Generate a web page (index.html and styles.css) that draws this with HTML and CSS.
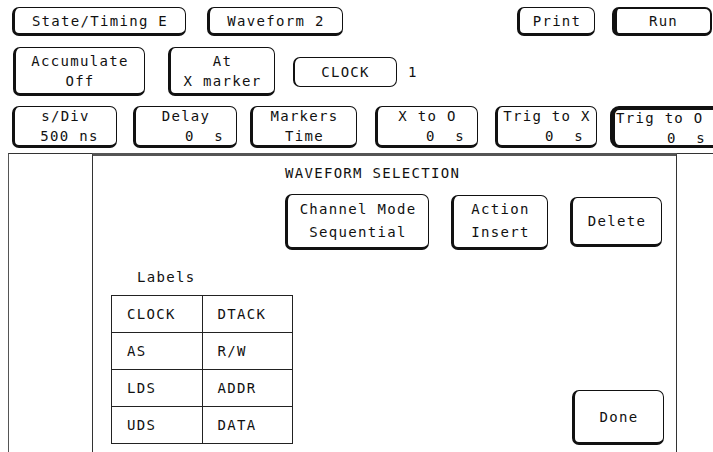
FILE: index.html
```html
<!DOCTYPE html>
<html lang="en">
<head>
    <meta charset="UTF-8">
    <title>Waveform Selection</title>
    <link rel="stylesheet" href="styles.css">
</head>
<body>
    <div class="row row1">
        <div class="btn w-state">State/Timing E</div>
        <div class="btn w-wave">Waveform 2</div>
        <div class="btn w-print">Print</div>
        <div class="btn w-run active">Run</div>
    </div>

    <div class="row row2">
        <div class="btn two w-acc"><span>Accumulate</span><span>Off</span></div>
        <div class="btn two w-at"><span>At</span><span>X marker</span></div>
        <div class="btn thin w-clock">CLOCK</div>
        <span class="count">1</span>
    </div>

    <div class="row row3">
        <div class="btn two w-sdiv"><span>s/Div</span><span class="val">500 ns</span></div>
        <div class="btn two w-delay"><span>Delay</span><span class="val right">0  s</span></div>
        <div class="btn two w-mark"><span>Markers</span><span>Time</span></div>
        <div class="btn two w-xo"><span>X to O</span><span class="val right">0  s</span></div>
        <div class="btn two w-tx"><span>Trig to X</span><span class="val right">0  s</span></div>
        <div class="btn two w-to active heavy"><span class="left">Trig to O</span><span class="val right">0  s</span></div>
    </div>

    <div class="screen">
        <div class="side"></div>
        <div class="dialog">
            <div class="title">WAVEFORM SELECTION</div>
            <div class="actions">
                <div class="btn tall w-mode"><span>Channel Mode</span><span>Sequential</span></div>
                <div class="btn tall w-action"><span>Action</span><span>Insert</span></div>
                <div class="btn w-delete">Delete</div>
            </div>
            <div class="lower">
                <div class="labels">
                    <div class="labels-title">Labels</div>
                    <table class="label-table">
                        <tr><td>CLOCK</td><td>DTACK</td></tr>
                        <tr><td>AS</td><td>R/W</td></tr>
                        <tr><td>LDS</td><td>ADDR</td></tr>
                        <tr><td>UDS</td><td>DATA</td></tr>
                    </table>
                </div>
                <div class="btn w-done">Done</div>
            </div>
        </div>
    </div>
</body>
</html>
```

FILE: styles.css
```css
* {
    box-sizing: border-box;
}
body {
    margin: 0;
    width: 713px;
    height: 452px;
    overflow: hidden;
    background: #fff;
    color: #111;
    font-family: 'DejaVu Sans Mono', 'Liberation Mono', monospace;
    font-size: 14px;
    letter-spacing: 1.3px;
}
.row {
    display: flex;
    align-items: center;
    white-space: nowrap;
}
.row1 {
    padding-top: 7px;
    height: 36px;
}
.row2 {
    margin-top: 11px;
    height: 49px;
}
.row3 {
    margin-top: 10px;
    height: 42px;
}

/* soft key */
.btn {
    flex: none;
    display: flex;
    flex-direction: column;
    align-items: center;
    justify-content: center;
    height: 100%;
    border: 1px solid #111;
    border-left-width: 3px;
    border-bottom-width: 3px;
    border-radius: 7px;
    line-height: 20px;
    white-space: pre;
}
.btn.thin {
    border-width: 1px;
    border-left-width: 2px;
    height: 30px;
}
.btn.active {
    border-width: 2px 2px 3px 5px;
}
.btn.heavy {
    border-top-width: 4px;
    border-radius: 9px 7px 7px 9px;
}
.btn .val {
    align-self: center;
    padding-left: 8px;
}
.btn .right {
    align-self: flex-end;
    padding-right: 12px;
}
.btn .left {
    align-self: flex-start;
    padding-left: 1px;
}

.w-state { width: 174px; margin-left: 12px; }
.w-wave { width: 136px; margin-left: 21px; }
.w-print { width: 78px; margin-left: 174px; }
.w-run { width: 100px; margin-left: 17px; }

.w-acc { width: 132px; margin-left: 13px; }
.w-at { width: 107px; margin-left: 23px; }
.w-clock { width: 104px; margin-left: 18px; }
.count { margin-left: 11px; }

.w-sdiv { width: 105px; margin-left: 12px; }
.w-delay { width: 104px; margin-left: 16px; }
.w-mark { width: 107px; margin-left: 13px; }
.w-xo { width: 103px; margin-left: 18px; }
.w-tx { width: 102px; margin-left: 17px; }
.w-to { width: 110px; margin-left: 13px; }

/* display area */
.screen {
    display: flex;
    margin-top: 5px;
    margin-left: 8px;
    height: 299px;
    border-top: 1px solid #333;
    border-left: 1px solid #555;
}
.side {
    width: 83px;
}
.dialog {
    width: 585px;
    margin-top: -1px;
    border-top: 3px solid #555;
    border-left: 1px solid #333;
    border-right: 1px solid #333;
    display: flex;
    flex-direction: column;
}
.title {
    margin-top: 7px;
    padding-left: 192px;
    line-height: 20px;
}
.actions {
    display: flex;
    align-items: center;
    margin-top: 11px;
    margin-left: 192px;
    height: 56px;
}
.btn.tall {
    line-height: 23px;
}
.w-mode { width: 144px; }
.w-action { width: 97px; margin-left: 22px; height: 55px; }
.w-delete { width: 92px; margin-left: 22px; height: 50px; }

.lower {
    display: flex;
    align-items: flex-end;
    margin-top: 17px;
}
.labels {
    margin-left: 18px;
}
.labels-title {
    padding-left: 26px;
    line-height: 20px;
}
.label-table {
    margin-top: 8px;
    width: 182px;
    border-collapse: collapse;
}
.label-table td {
    width: 50%;
    height: 37px;
    padding: 0 0 0 15px;
    border: 1px solid #222;
}
.w-done {
    width: 92px;
    height: 55px;
    margin-left: auto;
    margin-right: 12px;
    margin-bottom: -1px;
}
```
